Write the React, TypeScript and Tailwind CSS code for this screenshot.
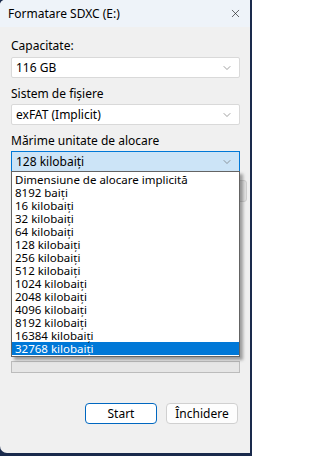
import { X, ChevronDown } from "lucide-react"

const sizes = [
    "Dimensiune de alocare implicită",
    "8192 baiți",
    "16 kilobaiți",
    "32 kilobaiți",
    "64 kilobaiți",
    "128 kilobaiți",
    "256 kilobaiți",
    "512 kilobaiți",
    "1024 kilobaiți",
    "2048 kilobaiți",
    "4096 kilobaiți",
    "8192 kilobaiți",
    "16384 kilobaiți",
    "32768 kilobaiți",
]

function Combo({ value, active }: { value: string; active?: boolean }) {
    return (
        <div
            className={
                active
                    ? "flex items-center h-[21px] pl-[4px] pr-[6px] border border-[#0078d7] bg-[#cce4f7]"
                    : "flex items-center h-[21px] pl-[4px] pr-[6px] border border-[#d9d9d9] rounded-[2px] bg-white"
            }
        >
            <span className="flex-1 truncate">{value}</span>
            <ChevronDown className="h-[12px] w-[12px] text-[#606060]" strokeWidth={1.2} />
        </div>
    )
}

export default function App() {
    return (
        <div className="w-[252px] h-[456px] bg-[#1a2a4c] font-['Noto_Sans',sans-serif] text-[12px] leading-[16px] text-black overflow-hidden">
            <div className="w-[250px] h-[453px] bg-[#f0f0f0] rounded-bl-[7px] rounded-tl-[5px] flex flex-col overflow-hidden">
                {/* Title bar */}
                <div className="h-[27px] bg-[#eef3f9] flex items-center pl-[8px] pr-[8px] shrink-0">
                    <span className="flex-1">Formatare SDXC (E:)</span>
                    <X className="h-[13px] w-[13px] text-[#1a1a1a]" strokeWidth={1.2} />
                </div>

                <div className="flex flex-col px-[11px] pr-[10px] pt-[11px]">
                    <div className="h-[17px]">Capacitate:</div>
                    <div className="mt-[2px]">
                        <Combo value="116 GB" />
                    </div>

                    <div className="mt-[8px] h-[17px]">Sistem de fișiere</div>
                    <div className="mt-[1px]">
                        <Combo value="exFAT (Implicit)" />
                    </div>

                    <div className="mt-[8px] h-[17px]">Mărime unitate de alocare</div>
                    <div className="mt-[1px]">
                        <Combo value="128 kilobaiți" active />
                    </div>

                    {/* Area covered by the open list */}
                    <div className="relative h-[189px]">
                        <div className="absolute right-[-7px] top-[8px] w-[10px] h-[22px] bg-[#e1e1e1] border border-[#cfcfcf] rounded-[3px]" />
                        <div className="absolute left-0 right-0 top-[-1px] bg-white border border-[#646464] shadow-[3px_3px_3px_rgba(0,0,0,0.35)] pt-[1px] pb-[1px] text-[11.5px]">
                            {sizes.map((s, i) => (
                                <div
                                    key={s}
                                    className={
                                        i === sizes.length - 1
                                            ? "h-[13px] leading-[13px] pl-[3px] bg-[#0078d7] text-white"
                                            : "h-[13px] leading-[13px] pl-[3px]"
                                    }
                                >
                                    {s}
                                </div>
                            ))}
                        </div>
                    </div>

                    {/* Progress */}
                    <div className="h-[12px] bg-[#e6e6e6] border border-[#bcbcbc]" />

                    {/* Buttons */}
                    <div className="flex justify-end gap-[9px] mt-[30px] pr-[2px]">
                        <button className="w-[72px] h-[21px] bg-white border-[1.5px] border-[#0067c0] rounded-[4px] leading-[16px]">
                            Start
                        </button>
                        <button className="w-[72px] h-[21px] bg-[#fdfdfd] border border-[#d0d0d0] rounded-[4px] leading-[16px]">
                            Închidere
                        </button>
                    </div>
                </div>
            </div>
        </div>
    )
}
